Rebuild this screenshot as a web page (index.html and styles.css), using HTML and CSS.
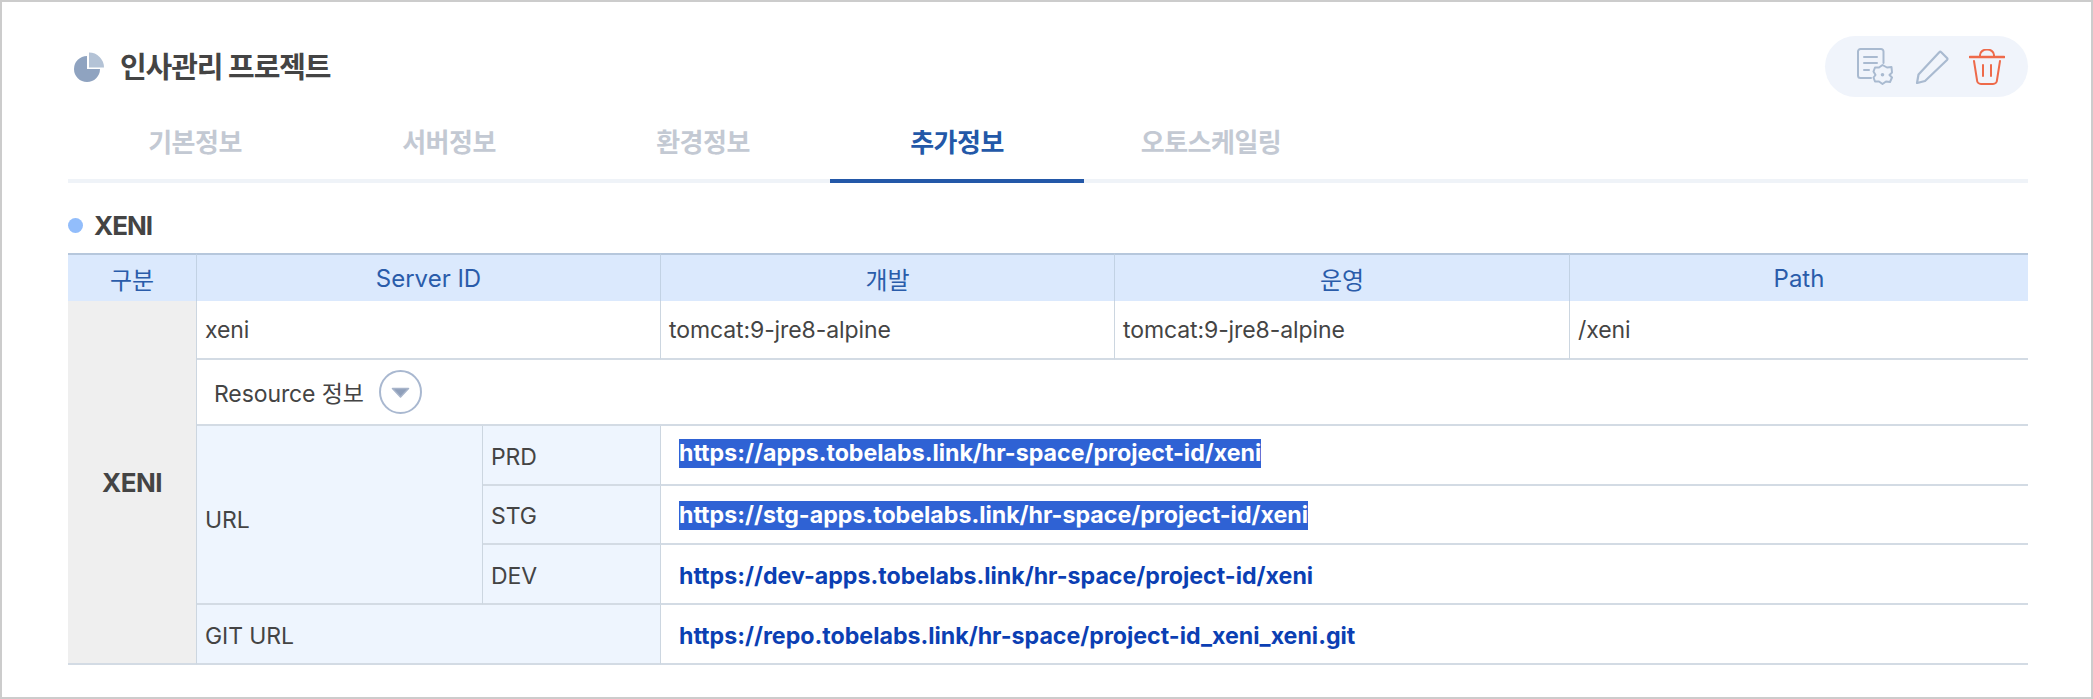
FILE: index.html
```html
<!DOCTYPE html>
<html lang="ko">
<head>
<meta charset="utf-8">
<title>인사관리 프로젝트</title>
<link rel="stylesheet" href="styles.css">
</head>
<body>
<main class="frame">
  <header class="head">
    <div class="title-wrap">
      <svg class="pie" viewBox="0 0 30 32" aria-hidden="true">
        <path d="M13 5 A13 13 0 1 0 26 18 L13 18 Z" fill="#8fa3c0"/>
        <path d="M15 1.5 A15 15 0 0 1 30 16.5 L15 16.5 Z" fill="#b4c3d6"/>
      </svg>
      <h1 class="title">인사관리 프로젝트</h1>
    </div>
    <div class="actions">
      <svg class="ic-doc" viewBox="0 0 36 37" fill="none" stroke="#a9bad0" stroke-width="2" stroke-linecap="round" stroke-linejoin="round" aria-hidden="true">
        <path d="M14 30 H3.5 A2.5 2.5 0 0 1 1 27.5 V3.5 A2.5 2.5 0 0 1 3.5 1 H24 A2.5 2.5 0 0 1 26.5 3.5 V15"/>
        <path d="M7 9 H20 M7 15 H20 M7 22 H12"/>
        <path d="M25.5 17 L30 19.5 L34.5 19 L35 24.5 L32.5 27 L35 29.5 L33 34 L29 33.5 L25.5 36 L22 33.5 L18 33.5 L16.5 29.5 L18.5 27 L16.5 23.5 L18 19.5 L22 19.5 Z"/>
        <circle cx="25.5" cy="26.8" r="1.8" fill="#a9bad0" stroke="none"/>
      </svg>
      <svg class="ic-pen" viewBox="0 0 34 34" fill="none" stroke="#a9bad0" stroke-width="2.2" stroke-linecap="round" stroke-linejoin="round" aria-hidden="true">
        <path d="M26 2 L32 8 A1.5 1.5 0 0 1 32 10 L10 31 L2 33 L3.5 24.5 L24.5 2 A1 1 0 0 1 26 2 Z"/>
      </svg>
      <svg class="ic-trash" viewBox="0 0 36 36" fill="none" stroke="#ee6a4a" stroke-width="2" stroke-linecap="round" stroke-linejoin="round" aria-hidden="true">
        <path d="M1 8 H35" stroke-width="2.6"/>
        <path d="M11 7 V6 A7 5.5 0 0 1 25 6 V7"/>
        <path d="M5 12 L8 31 A4 4 0 0 0 12 35 H24 A4 4 0 0 0 28 31 L31 12"/>
        <path d="M14 16 V27 M22 16 V27"/>
      </svg>
    </div>
  </header>

  <nav class="tabs">
    <a class="tab">기본정보</a>
    <a class="tab">서버정보</a>
    <a class="tab">환경정보</a>
    <a class="tab active">추가정보</a>
    <a class="tab">오토스케일링</a>
  </nav>

  <h2 class="section"><span class="dot"></span>XENI</h2>

  <table class="grid">
    <colgroup>
      <col class="c-a"><col class="c-b"><col class="c-c"><col class="c-d"><col class="c-e"><col class="c-f">
    </colgroup>
    <thead>
      <tr>
        <th>구분</th>
        <th colspan="2">Server ID</th>
        <th>개발</th>
        <th>운영</th>
        <th>Path</th>
      </tr>
    </thead>
    <tbody>
      <tr class="r1">
        <td class="group" rowspan="6">XENI</td>
        <td colspan="2">xeni</td>
        <td>tomcat:9-jre8-alpine</td>
        <td>tomcat:9-jre8-alpine</td>
        <td>/xeni</td>
      </tr>
      <tr class="r2">
        <td class="resource" colspan="5">
          <div class="res-wrap">
            <span>Resource 정보</span>
            <svg class="toggle" viewBox="0 0 43 44" aria-hidden="true">
              <ellipse cx="21.5" cy="22" rx="20.5" ry="21" fill="#fff" stroke="#a9b8d0" stroke-width="2"/>
              <path d="M13.5 18.5 H29.5 L21.5 27 Z" fill="#8f9fba" stroke="#a7b4ca" stroke-width="1.6" stroke-linejoin="round"/>
            </svg>
          </div>
        </td>
      </tr>
      <tr class="r3">
        <td class="label url-span" rowspan="3">URL</td>
        <td class="label">PRD</td>
        <td class="url url-up" colspan="3"><a class="link sel">https://apps.tobelabs.link/hr-space/project-id/xeni</a></td>
      </tr>
      <tr class="r3b">
        <td class="label">STG</td>
        <td class="url url-stg" colspan="3"><a class="link sel">https://stg-apps.tobelabs.link/hr-space/project-id/xeni</a></td>
      </tr>
      <tr class="r3">
        <td class="label">DEV</td>
        <td class="url url-down" colspan="3"><a class="link">https://dev-apps.tobelabs.link/hr-space/project-id/xeni</a></td>
      </tr>
      <tr class="r3">
        <td class="label" colspan="2">GIT URL</td>
        <td class="url url-down" colspan="3"><a class="link">https://repo.tobelabs.link/hr-space/project-id_xeni_xeni.git</a></td>
      </tr>
    </tbody>
  </table>
</main>
</body>
</html>
```
FILE: styles.css
```css
* { box-sizing: border-box; }
html, body { margin: 0; padding: 0; background: #fff; }
body {
  font-family: Inter, "Noto Sans CJK KR", sans-serif;
  color: #444;
}
.frame {
  width: 2093px;
  height: 699px;
  border: 2px solid #cccccc;
  padding: 34px 63px 0 66px;
  overflow: hidden;
  background: #fff;
}
.head {
  display: flex;
  justify-content: space-between;
  align-items: center;
  height: 61px;
}
.title-wrap {
  display: flex;
  align-items: center;
  gap: 16px;
  padding-left: 6px;
}
.pie { width: 30px; height: 32px; }
.title {
  margin: 0 0 3px;
  font-size: 29px;
  font-weight: 700;
  letter-spacing: -1.1px;
  color: #444;
}
.actions {
  display: flex;
  align-items: center;
  width: 203px;
  height: 61px;
  padding-left: 32px;
  background: #f0f4fb;
  border-radius: 31px;
}
.ic-doc { width: 36px; height: 37px; }
.ic-pen { width: 34px; height: 34px; margin-left: 22px; }
.ic-trash { width: 36px; height: 36px; margin-left: 20px; }

.tabs {
  display: flex;
  height: 86px;
  border-bottom: 4px solid #eff3f8;
}
.tab {
  width: 254px;
  height: 86px;
  padding-top: 25px;
  text-align: center;
  font-size: 26px;
  font-weight: 700;
  letter-spacing: -0.5px;
  color: #c3c9d3;
}
.tab.active {
  color: #2358a8;
  border-bottom: 4px solid #2358a8;
}
.section {
  display: flex;
  align-items: center;
  gap: 11px;
  height: 70px;
  margin: 0;
  padding-top: 14px;
  font-size: 26px;
  font-weight: 700;
  letter-spacing: -1px;
  color: #444;
}
.dot {
  width: 15px;
  height: 15px;
  border-radius: 50%;
  background: #92bdfb;
}
.grid {
  width: 1960px;
  table-layout: fixed;
  border-collapse: separate;
  border-spacing: 0;
  font-size: 23px;
  letter-spacing: -0.1px;
}
.c-a { width: 129px; }
.c-b { width: 286px; }
.c-c { width: 178px; }
.c-d { width: 454px; }
.c-e { width: 455px; }
.c-f { width: 458px; }
th {
  height: 48px;
  padding: 0;
  background: #dbe9fd;
  border-top: 2px solid #b6c7dc;
  border-right: 1px solid #c2d2e4;
  font-size: 24px;
  font-weight: 400;
  letter-spacing: 0;
  color: #2a5caa;
  text-align: center;
}
th:last-child { border-right: 0; }
td {
  padding: 0 8px;
  border-bottom: 2px solid #d3dbe4;
  border-right: 1px solid #ccd6e0;
  color: #444;
}
td:last-child { border-right: 0; }
.r1 td { height: 59px; }
.r2 td { height: 66px; }
.r3 td { height: 60px; }
.r3b td { height: 59px; }
.group {
  padding: 0;
  background: #efefef;
  text-align: center;
  font-weight: 700;
  font-size: 26px;
  letter-spacing: -0.5px;
}
.label { padding-top: 3px; background: #eef5fe; }
.url-span { padding-top: 10px; }
.resource { padding-left: 17px; }
.res-wrap {
  display: flex;
  align-items: center;
  gap: 15px;
}
.toggle { width: 43px; height: 44px; }
.url { padding-left: 18px; }
.url-up { padding-bottom: 4px; }
.url-stg { padding-top: 2px; }
.url-down { padding-top: 3px; }
.link {
  font-size: 23.2px;
  letter-spacing: 0;
  font-weight: 700;
  color: #0b3fb3;
}
.sel {
  display: inline-block;
  line-height: 29px;
  background: #2f62d4;
  color: #fff;
}
```
